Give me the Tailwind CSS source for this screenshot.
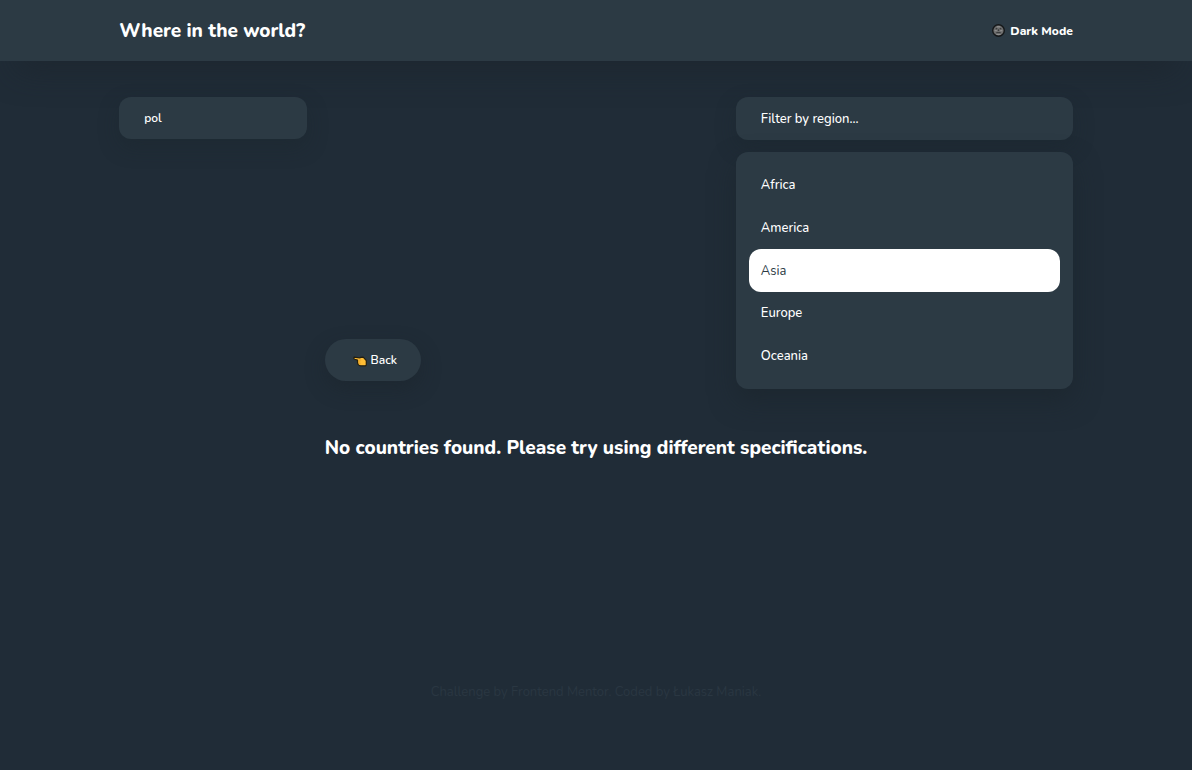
<!DOCTYPE html>
<html lang="en">
<head>
<meta charset="utf-8">
<meta name="viewport" content="width=device-width, initial-scale=1">
<title>Where in the world?</title>
<script src="https://cdn.jsdelivr.net/npm/@tailwindcss/browser@4"></script>
</head>
<body class="flex min-h-screen flex-col bg-[#202c37] font-['Nunito','Open_Sans',sans-serif] text-[13px] font-medium text-white">
<header class="bg-[#2c3a44] shadow-[0_24px_32px_-16px_rgba(27,36,43,0.65)]">
  <div class="mx-auto flex h-[61px] w-4/5 items-center justify-between">
    <h1 class="text-[19px] leading-7 font-extrabold"><a href="#">Where in the world?</a></h1>
    <button type="button" class="flex items-center gap-[5px] text-[12px] font-extrabold">
      <svg class="size-[13px]" viewBox="0 0 13 13" aria-hidden="true">
        <circle cx="6.5" cy="6.5" r="5.8" fill="#6d6d6d" stroke="#151719" stroke-width="1.4"/>
        <path d="M3.7 4.8h1.6M7.7 4.8h1.6M6.5 5.4v1.4M4.3 8.8h4.4" fill="none" stroke="#2b2d2e" stroke-width="1.1"/>
        <path d="M2.6 6.7h2.2M8.2 6.7h2.2M4.4 10.3h4.2M5 2.8h3" stroke="#979797" stroke-width="1"/>
      </svg>
      Dark Mode
    </button>
  </div>
</header>
<main class="mx-auto mt-9 w-4/5 flex-1">
  <div class="flex items-start justify-between">
    <input type="text" value="pol" aria-label="Search for a country" class="h-[42px] w-[188px] rounded-xl bg-[#2c3a44] px-[25px] text-[12px] font-semibold shadow-[0_8px_20px_rgba(27,36,43,0.35)] outline-none">
    <div class="relative w-[337px]">
      <button type="button" aria-haspopup="listbox" aria-expanded="true" class="block h-[43px] w-full rounded-xl bg-[#2c3a44] px-[25px] pt-0.5 text-left shadow-[0_8px_20px_rgba(27,36,43,0.35)]">Filter by region...</button>
      <ul class="absolute inset-x-0 top-full mt-3 rounded-xl bg-[#2c3a44] px-[13px] py-3 shadow-[0_12px_26px_rgba(27,36,43,0.6)]">
        <li><button type="button" class="block h-[42px] w-full rounded-xl px-3 pt-0.5 text-left">Africa</button></li>
        <li><button type="button" class="block h-[43px] w-full rounded-xl px-3 pt-0.5 text-left">America</button></li>
        <li><button type="button" class="block h-[43px] w-full rounded-xl bg-white px-3 pt-0.5 text-left font-normal text-[#2c3a44]">Asia</button></li>
        <li><button type="button" class="block h-[42px] w-full rounded-xl px-3 pt-0.5 text-left">Europe</button></li>
        <li><button type="button" class="block h-[43px] w-full rounded-xl px-3 pt-0.5 text-left">Oceania</button></li>
      </ul>
    </div>
  </div>
  <section class="mx-auto mt-[199px] w-fit">
    <button type="button" class="flex h-[42px] w-24 items-center justify-center gap-1 rounded-full bg-[#2c3a44] pl-1 text-[12px] font-semibold shadow-[0_8px_20px_rgba(27,36,43,0.45)]">
      <svg class="size-[14px]" viewBox="0 -3 14 14" aria-hidden="true">
        <path d="M1.1 1.1Q.2 2.6 1.7 3.2L4.5 4.1 4.6 7Q5 9.6 7.6 9.8H12.5L13.3 9V4.6L10.2 1.2 7.5 1.4 6.8 1.9Z" fill="#ffbd35" stroke="#241f10" stroke-width="1.2" stroke-linejoin="round"/>
        <path d="M5.2 4.2l3-.2M5.4 6h2M5.7 7.8h2" stroke="#d08a1f" stroke-width=".5"/>
      </svg>
      Back
    </button>
    <h2 class="mt-[52px] text-[19px] leading-[30px] font-extrabold">No countries found. Please try using different specifications.</h2>
  </section>
</main>
<footer class="pb-[68px] text-center leading-5 font-normal text-[#2a3742]">Challenge by <a href="#">Frontend Mentor</a>. Coded by <a href="#">Łukasz Maniak</a>.</footer>
</body>
</html>
